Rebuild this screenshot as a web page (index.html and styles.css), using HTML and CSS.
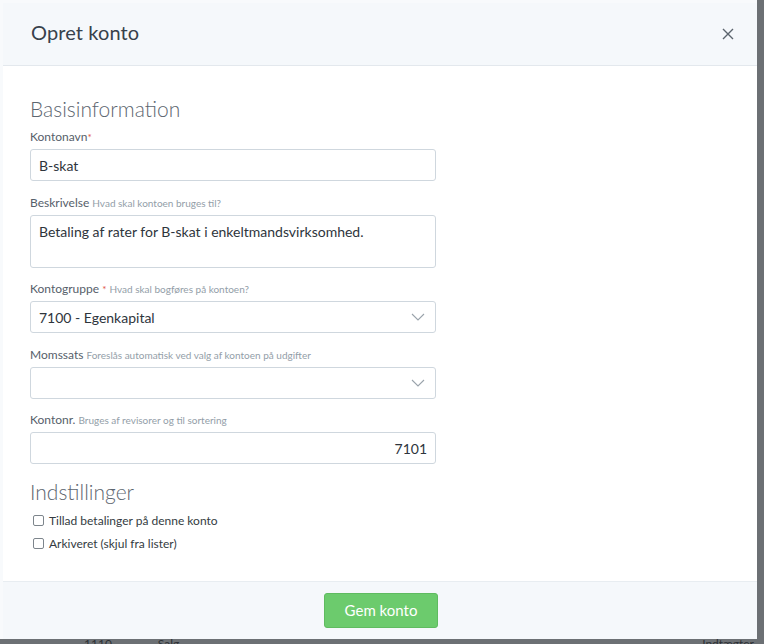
FILE: index.html
```html
<!DOCTYPE html>
<html lang="da">
<head>
<meta charset="utf-8">
<title>Opret konto</title>
<link rel="stylesheet" href="styles.css">
</head>
<body>
<div class="modal">
  <div class="modal-header">
    <h1 class="modal-title">Opret konto</h1>
    <button class="close" aria-label="Luk">
      <svg width="12" height="12" viewBox="0 0 12 12"><path d="M1 1L11 11M11 1L1 11" stroke="#5b646d" stroke-width="1.4" fill="none"/></svg>
    </button>
  </div>
  <div class="modal-body">
    <h2 class="section">Basisinformation</h2>
    <div class="field">
      <label class="label">Kontonavn<span class="req">*</span></label>
      <div class="input">B-skat</div>
    </div>
    <div class="field">
      <label class="label">Beskrivelse <span class="hint">Hvad skal kontoen bruges til?</span></label>
      <div class="input textarea">Betaling af rater for B-skat i enkeltmandsvirksomhed.</div>
    </div>
    <div class="field">
      <label class="label">Kontogruppe <span class="req">*</span> <span class="hint">Hvad skal bogføres på kontoen?</span></label>
      <div class="input select"><span>7100 - Egenkapital</span>
        <svg class="chev" width="14" height="8" viewBox="0 0 14 8"><path d="M1 1L7 7L13 1" stroke="#9aa3ab" stroke-width="1.1" fill="none"/></svg>
      </div>
    </div>
    <div class="field">
      <label class="label">Momssats <span class="hint">Foreslås automatisk ved valg af kontoen på udgifter</span></label>
      <div class="input select"><span></span>
        <svg class="chev" width="14" height="8" viewBox="0 0 14 8"><path d="M1 1L7 7L13 1" stroke="#9aa3ab" stroke-width="1.1" fill="none"/></svg>
      </div>
    </div>
    <div class="field">
      <label class="label">Kontonr. <span class="hint">Bruges af revisorer og til sortering</span></label>
      <div class="input right">7101</div>
    </div>
    <h2 class="section section-2">Indstillinger</h2>
    <label class="check"><span class="box"></span>Tillad betalinger på denne konto</label>
    <label class="check"><span class="box"></span>Arkiveret (skjul fra lister)</label>
  </div>
  <div class="modal-footer">
    <button class="btn">Gem konto</button>
  </div>
</div>
<div class="behind">
  <span class="c1">1110</span><span class="c2">Salg</span><span class="c3">Indtægter</span>
</div>
</body>
</html>
```

FILE: styles.css
```css
html, body {
  margin: 0;
  padding: 0;
}
body {
  width: 764px;
  height: 644px;
  overflow: hidden;
  background: #6c7074;
  font-family: Lato, "Open Sans", sans-serif;
}
.modal {
  width: 754px;
  height: 636px;
  background: #fff;
  border-top: 3px solid #f8fafc;
  border-left: 3px solid #f8fafc;
  display: flex;
  flex-direction: column;
}
.modal-header {
  height: 62px;
  background: #f5f8fb;
  border-bottom: 1px solid #e3e8ed;
  display: flex;
  align-items: center;
  justify-content: space-between;
  padding: 0 23px 0 28px;
}
.modal-title {
  margin: -4px 0 0;
  font-size: 20px;
  font-weight: 400;
  color: #37414b;
  letter-spacing: 0.1px;
}
.close {
  border: 0;
  background: none;
  padding: 0;
  display: flex;
  margin-top: 0;
}
.modal-body {
  flex: 1;
  padding: 30px 0 0 27px;
}
.section {
  margin: 0 0 8px;
  font-size: 21px;
  line-height: 26px;
  font-weight: 300;
  color: #5d6670;
}
.section-2 {
  margin-top: 0;
  margin-bottom: 8px;
}
.field {
  width: 406px;
  margin-bottom: 14.5px;
}
.label {
  display: block;
  font-size: 12px;
  line-height: 14px;
  color: #56606a;
  margin-bottom: 5px;
}
.req {
  color: #e0533f;
  font-size: 10px;
  vertical-align: top;
}
.hint {
  font-size: 10px;
  color: #939ea8;
}
.input {
  box-sizing: border-box;
  height: 32px;
  border: 1px solid #cfd7de;
  border-radius: 3px;
  padding: 0 8px;
  font-size: 14px;
  color: #2e353c;
  display: flex;
  align-items: center;
}
.textarea {
  height: 53px;
  align-items: flex-start;
  padding-top: 7px;
}
.select {
  justify-content: space-between;
  padding-right: 10px;
}
.right {
  justify-content: flex-end;
}
.check {
  display: flex;
  align-items: center;
  height: 16px;
  margin: 0 0 6.5px 3px;
  font-size: 12px;
  color: #343b42;
}
.box {
  box-sizing: border-box;
  width: 11px;
  height: 11px;
  border: 1px solid #7d858c;
  border-radius: 2px;
  margin-right: 5px;
  background: #fff;
}
.modal-footer {
  height: 57px;
  background: #f5f8fb;
  border-top: 1px solid #e8edf1;
  display: flex;
  justify-content: center;
  align-items: center;
}
.btn {
  width: 114px;
  height: 35px;
  margin: -1px 0 0 2px;
  background: #6ccb6d;
  border: 1px solid #5fbb60;
  border-radius: 3px;
  color: #fff;
  font-family: Lato, sans-serif;
  font-size: 15px;
}
.behind {
  display: flex;
  font-size: 12px;
  color: #2c3035;
  margin-top: -3px;
}
.c1 { margin-left: 84px; }
.c2 { margin-left: 46px; }
.c3 { margin-left: auto; margin-right: 10px; }
```
